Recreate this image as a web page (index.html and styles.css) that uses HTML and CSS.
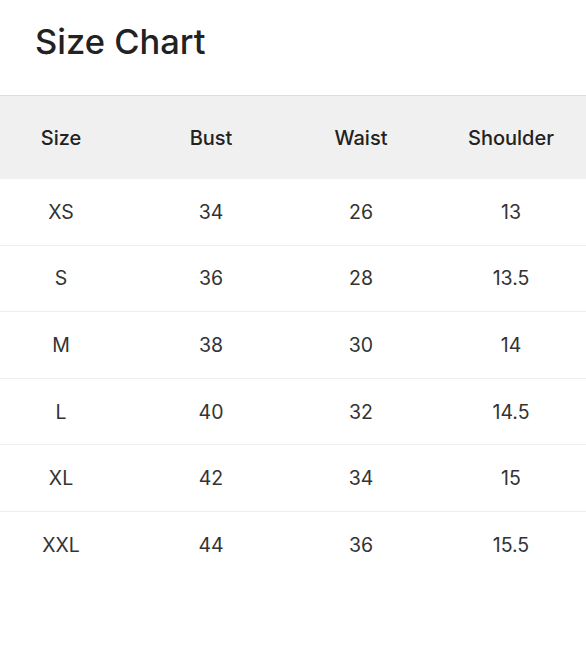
FILE: index.html
```html
<!DOCTYPE html>
<html>
<head>
<meta charset="utf-8">
<link rel="stylesheet" href="styles.css">
</head>
<body>
<h1 class="title">Size Chart</h1>
<div class="table-wrap">
  <div class="table">
    <div class="row head"><div>Size</div><div>Bust</div><div>Waist</div><div>Shoulder</div></div>
    <div class="row"><div>XS</div><div>34</div><div>26</div><div>13</div></div>
    <div class="row"><div>S</div><div>36</div><div>28</div><div>13.5</div></div>
    <div class="row"><div>M</div><div>38</div><div>30</div><div>14</div></div>
    <div class="row"><div>L</div><div>40</div><div>32</div><div>14.5</div></div>
    <div class="row"><div>XL</div><div>42</div><div>34</div><div>15</div></div>
    <div class="row last"><div>XXL</div><div>44</div><div>36</div><div>15.5</div></div>
  </div>
</div>
</body>
</html>
```
FILE: styles.css
```css
html, body { margin: 0; padding: 0; background: #fff; }
body { font-family: Inter, "Noto Sans", sans-serif; color: #222; }
.title {
  margin: 0;
  padding: 21px 35px 0;
  height: 95px;
  box-sizing: border-box;
  font-size: 34.5px;
  font-weight: 500;
  line-height: 42px;
  color: #222;
}
.table-wrap { overflow: hidden; }
.table { width: 600px; margin-left: -14px; }
.row {
  display: grid;
  grid-template-columns: repeat(4, 1fr);
  height: 65.6px;
  align-items: center;
  text-align: center;
  font-size: 19.5px;
  color: #333;
  border-bottom: 1px solid #eeeeee;
}
.row.head {
  height: 83px;
  background: #f0f0f0;
  border-top: 1px solid #dddddd;
  border-bottom: none;
  font-size: 20px;
  font-weight: 500;
  color: #222;
}
.row.last { border-bottom: none; }
```
